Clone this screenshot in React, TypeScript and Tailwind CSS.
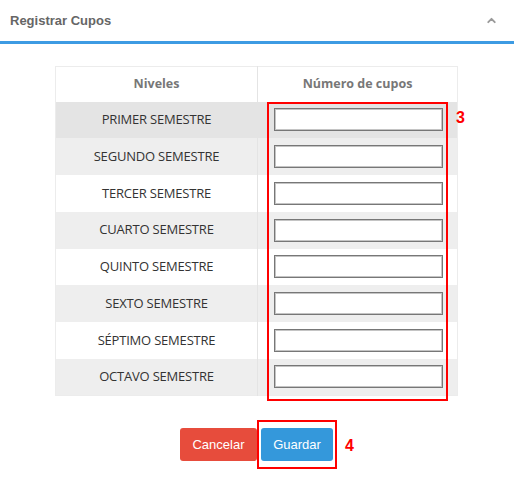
import { ChevronUp } from 'lucide-react';

const NIVELES = [
  'PRIMER SEMESTRE',
  'SEGUNDO SEMESTRE',
  'TERCER SEMESTRE',
  'CUARTO SEMESTRE',
  'QUINTO SEMESTRE',
  'SEXTO SEMESTRE',
  'SÉPTIMO SEMESTRE',
  'OCTAVO SEMESTRE',
];

function rowBg(i: number) {
  if (i === 0) return 'bg-[#e4e4e4]';
  return i % 2 === 1 ? 'bg-[#eeeeee]' : 'bg-white';
}

export default function App() {
  return (
    <div className="relative w-[514px] h-[491px] bg-white overflow-hidden font-['Liberation_Sans',Arial,sans-serif]">
      <div className="h-[44px] px-[10px] flex items-center justify-between border-b-[3px] border-[#3d9be3]">
        <span className="text-[13px] font-bold text-[#666]">Registrar Cupos</span>
        <ChevronUp className="w-[13px] h-[13px] text-[#9a9a9a] mr-[6px]" strokeWidth={3.5} />
      </div>

      <div className="ml-[55px] mt-[22px] w-[403px] font-['Open_Sans',sans-serif]">
        <table className="w-full border-collapse border border-[#ececec] table-fixed">
          <thead>
            <tr className="h-[35px]">
              <th className="w-[202px] border-r border-[#e4e4e4] text-[12.5px] font-bold text-[#777]">Niveles</th>
              <th className="text-[12.5px] font-bold text-[#777]">Número de cupos</th>
            </tr>
          </thead>
          <tbody>
            {NIVELES.map((n, i) => (
              <tr key={n} className={`h-[36.75px] ${rowBg(i)}`}>
                <td className="border-r border-[#e4e4e4] text-center text-[13px] text-[#333] tracking-[-0.2px]">{n}</td>
                <td className="pl-[16px]">
                  <input
                    type="text"
                    className="block w-[169px] h-[23px] bg-white border border-[#777] shadow-[inset_0_0_0_1px_#c4c4c4] outline-none"
                  />
                </td>
              </tr>
            ))}
          </tbody>
        </table>
      </div>

      {/* annotation 3 */}
      <div className="absolute left-[267px] top-[102px] w-[181px] h-[299px] border-2 border-[#ff0000]" />
      <span className="absolute left-[456px] top-[106px] text-[16px] font-bold text-[#ff0000]">3</span>

      <div className="mt-[24px] ml-[180px] flex items-center">
        <button className="w-[77px] h-[33px] rounded-[3px] bg-[#e74c3c] text-white text-[13px]">Cancelar</button>
        <div className="border-2 border-[#ff0000] px-[2px] py-[6px]">
          <button className="w-[72px] h-[33px] rounded-[3px] bg-[#3498db] text-white text-[13px]">Guardar</button>
        </div>
        <span className="ml-[8px] mt-[2px] text-[16px] font-bold text-[#ff0000]">4</span>
      </div>
    </div>
  );
}
